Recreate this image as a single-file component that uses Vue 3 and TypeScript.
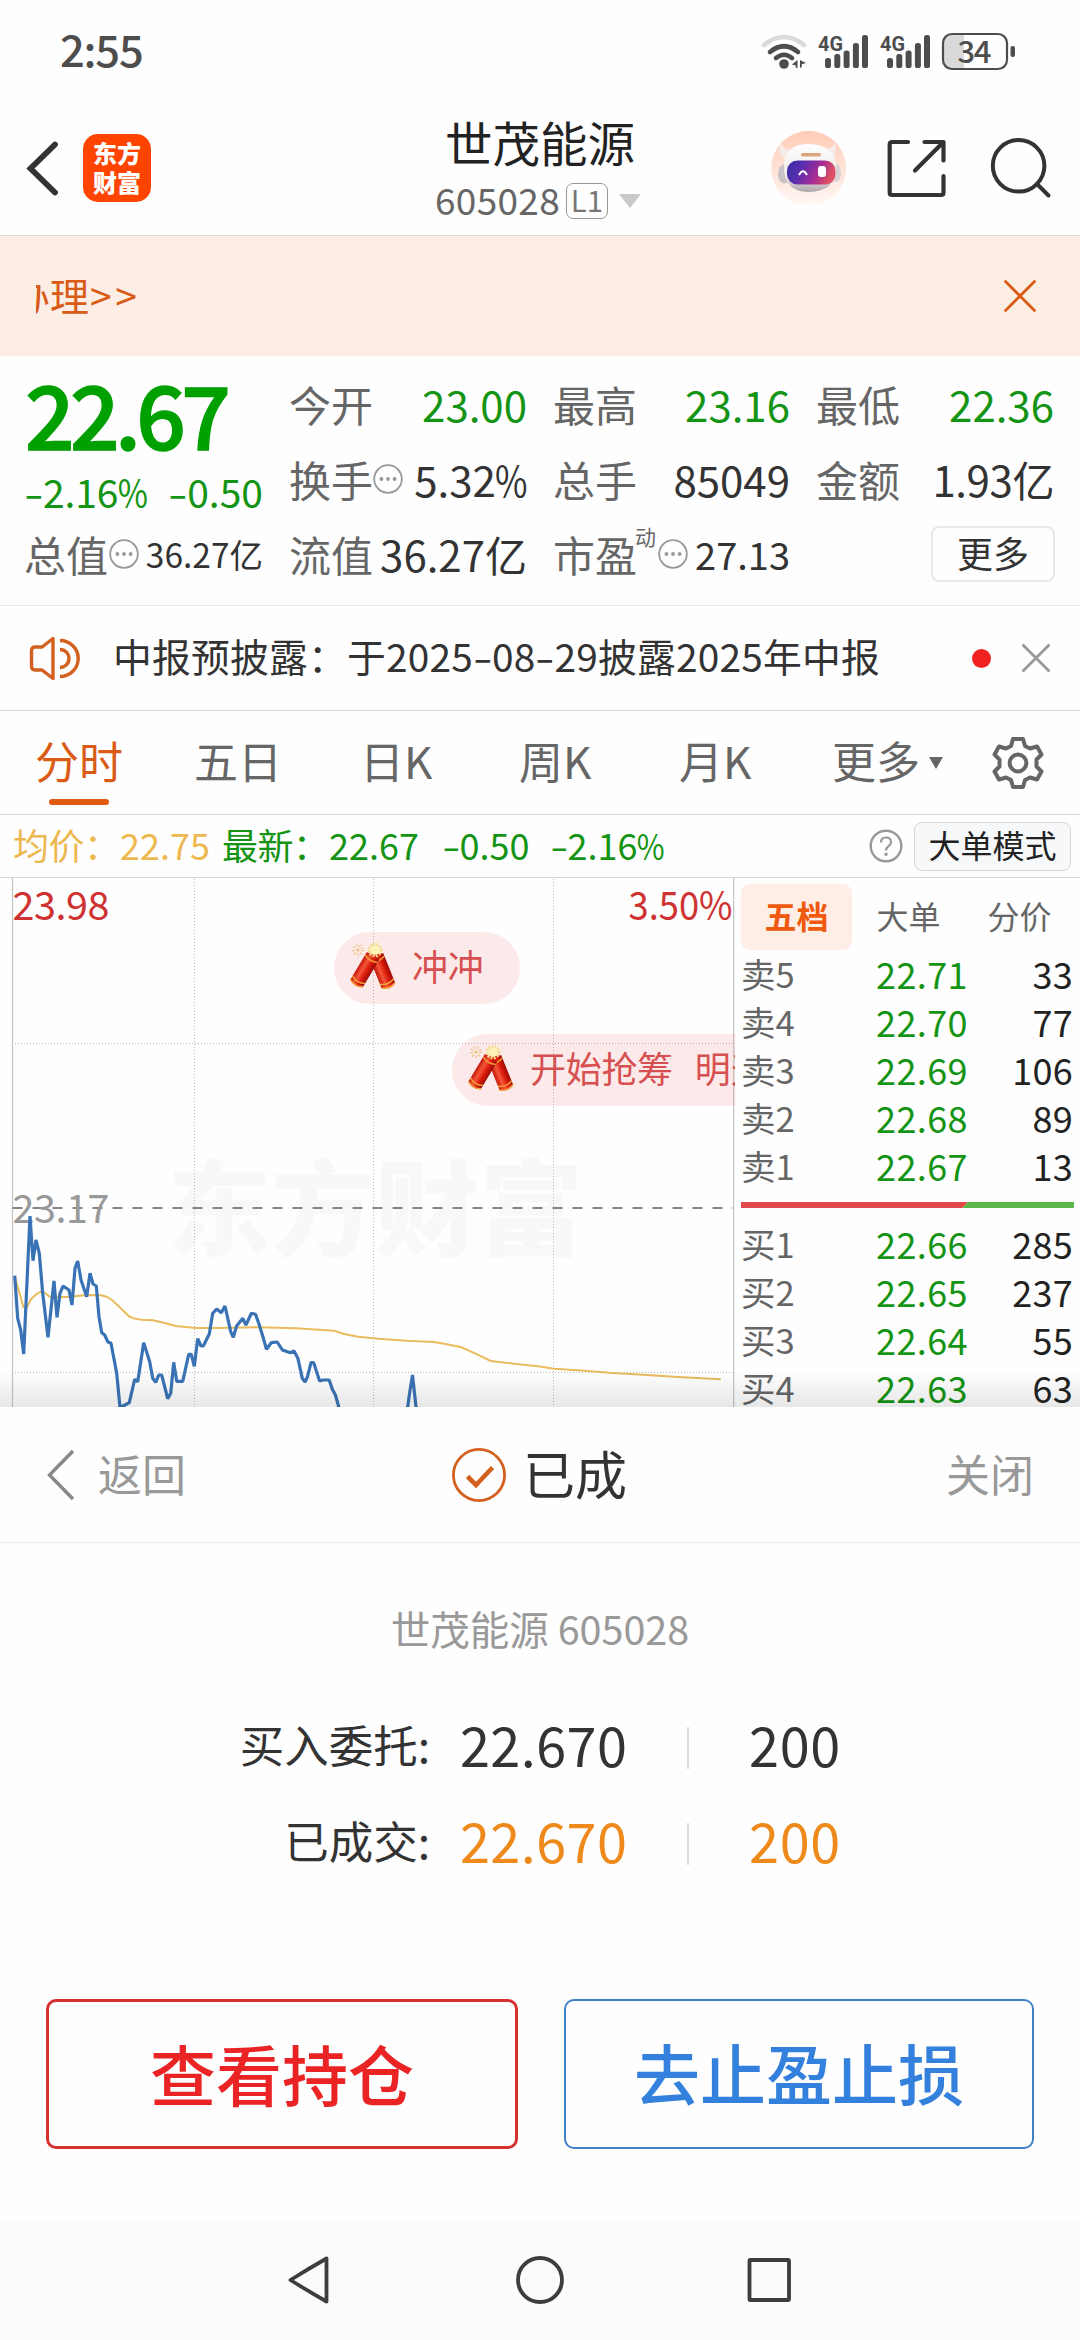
<script setup lang="ts">
import { h, type FunctionalComponent } from 'vue'

interface Level { side: string; price: string; volume: string }

// Renders a figure, narrowing "%" and widening "-" so they sit well beside the digits.
const Num: FunctionalComponent<{ v: string }> = (props) =>
  h(
    'span',
    { class: 'num' },
    props.v.split(/([%-])/).filter(Boolean).map((part) =>
      part === '%' ? h('i', { class: 'pct' }, '%') : part === '-' ? h('i', { class: 'dash' }, '-') : part,
    ),
  )
Num.props = ['v']

const MoreDots: FunctionalComponent = () =>
  h('svg', { class: 'dots', width: 30, height: 30, viewBox: '0 0 30 30' }, [
    h('circle', { cx: 15, cy: 15, r: 13.8, fill: 'none', stroke: '#999', 'stroke-width': 1.8 }),
    ...[8.4, 15, 21.6].map((cx) => h('circle', { cx, cy: 15, r: 1.9, fill: '#999' })),
  ])

const Cracker: FunctionalComponent = () =>
  h('svg', { class: 'cracker', width: 48, height: 50, viewBox: '0 0 48 50' }, [
    h('defs', [
      h('linearGradient', { id: 'tube', x1: 0, x2: 1, y1: 0, y2: 0 }, [
        h('stop', { offset: 0, 'stop-color': '#c31408' }),
        h('stop', { offset: 0.35, 'stop-color': '#f4573a' }),
        h('stop', { offset: 0.65, 'stop-color': '#dc1c0c' }),
        h('stop', { offset: 1, 'stop-color': '#9c0b05' }),
      ]),
    ]),
    h('circle', { cx: 10, cy: 7, r: 4.4, fill: 'none', stroke: '#e9c07a', 'stroke-width': 3, 'stroke-dasharray': '1 2.1' }),
    h('circle', { cx: 10, cy: 7, r: 1.5, fill: '#eec27a' }),
    ...['translate(28.5 13) rotate(-22)', 'translate(25 13) rotate(31)'].map((transform) =>
      h('g', { transform }, [
        h('path', { d: 'M-7.300 0Q0 -3 7.300 0V32Q0 37 -7.300 32Z', fill: 'url(#tube)' }),
        h('path', { d: 'M-7.300 3Q0 7 7.300 3M-7.300 27.500Q0 32 7.300 27.500M-7.300 31.500Q0 36 7.300 31.500', fill: 'none', stroke: '#f2a53a', 'stroke-width': 1.4 }),
      ]),
    ),
    h('circle', { cx: 27, cy: 7, r: 5.2, fill: 'none', stroke: '#f5dc8c', 'stroke-width': 4.4, 'stroke-dasharray': '1.6 1.2' }),
    h('circle', { cx: 27, cy: 7, r: 4.6, fill: '#fdf3b4' }),
  ])

const tabs = ['五日', '日K', '周K', '月K']

const sells: Level[] = [
  { side: '卖5', price: '22.71', volume: '33' },
  { side: '卖4', price: '22.70', volume: '77' },
  { side: '卖3', price: '22.69', volume: '106' },
  { side: '卖2', price: '22.68', volume: '89' },
  { side: '卖1', price: '22.67', volume: '13' },
]
const buys: Level[] = [
  { side: '买1', price: '22.66', volume: '285' },
  { side: '买2', price: '22.65', volume: '237' },
  { side: '买3', price: '22.64', volume: '55' },
  { side: '买4', price: '22.63', volume: '63' },
]

const priceLine =
  '14.7,1275.7 17.7,1318.3 20.7,1330 23.7,1354 30,1216 33,1260.7 36,1240 39.3,1253.3 42.7,1293.3 48,1337.3 54,1281 57,1317.3 60,1293.3 63,1286 69,1290 72,1305 75,1268.3 77.7,1261 81,1280 86.7,1296.7 90,1273.3 93,1284 96.3,1286 99,1316.7 101.7,1332.7 104.7,1335 107.7,1341.7 111,1343.3 116.7,1373.3 120,1407.3 125,1405 129.3,1402.7 134.7,1379.3 137.7,1381.7 143.7,1342.7 149.7,1361.7 152.7,1378.3 155.7,1382.3 158.7,1375 161.7,1375 167.7,1398.7 170.7,1393.3 173.7,1362.3 176.7,1381.3 182.7,1381.3 188.7,1354.3 191.3,1354.3 194.3,1366.3 197.7,1338.7 201,1346 203.3,1346 209.3,1334 212.7,1313.3 216.7,1309 221.3,1312.7 225,1306 230.7,1331.7 233.3,1337.3 236.6,1326 242.8,1318.3 245.9,1325 251.4,1313.3 255.5,1314.3 259,1324 263.4,1338.3 266.5,1349.3 271.3,1342.7 277.2,1342 282.4,1350 290.3,1352.7 294,1351 297.9,1358.3 302.3,1378.3 305.1,1382 307.5,1376.7 311,1362.7 313.7,1362.7 319.6,1381 323,1380 329.2,1380 332.3,1389.3 335.4,1395 338.8,1407 342,1420 404,1420 407.7,1407 409.8,1391.7 412.5,1375 416,1407 417,1420'
const averageLine =
  '14.8,1276.7 20,1295 23.4,1307 26.9,1307.3 31,1299 36,1294.5 41.3,1291.3 46,1293.5 50,1297 69,1297 86,1295 101.6,1295.3 107,1297 112,1300 120,1307.5 129,1316.3 134,1318.4 141.2,1319.7 153,1320.3 168.7,1324 175.6,1326 196.3,1328 220,1328 258,1327.3 296,1328.3 334,1330.7 344.4,1334 358,1336.7 378.8,1338.7 406.3,1340.7 434,1342 444.2,1343.7 461.4,1347.3 475,1353.3 490.7,1361 516.5,1364 540,1366.6 553.8,1368.7 585,1370.7 609,1372.7 643.3,1374.7 677.7,1377 720.8,1379.3'
</script>

<template>
  <div class="screen">
    <div class="status">
      <span class="clock">2:55</span>
      <svg width="256" height="40" viewBox="760 30 256 40" class="sys">
        <g fill="none" stroke="#4d4d4d" stroke-width="4.6" stroke-linecap="round">
          <path d="M764 44Q784 28 804 44" stroke="#d9d9d9" />
          <path d="M770 51Q784 39.5 798 51" />
          <path d="M776 57Q784 50.5 792 57" />
        </g>
        <circle cx="784" cy="63" r="4.8" fill="#4d4d4d" />
        <path d="M797.5 59V67H795.8V64.5L791.8 63.5ZM800 59V67L801.8 66V63.2L806 62Z" fill="#4d4d4d" />
        <g v-for="dx in [0, 62]" :key="dx" fill="#4d4d4d">
          <text :x="818 + dx" y="50" class="gen" textLength="25" lengthAdjust="spacingAndGlyphs">4G</text>
          <rect :x="825 + dx" y="57" width="6" height="10" rx="2.6" />
          <rect :x="834.3 + dx" y="53" width="6" height="14" rx="2.6" />
          <rect :x="843.6 + dx" y="49.5" width="6" height="17.5" rx="2.6" />
          <rect :x="852.9 + dx" y="42" width="6" height="25" rx="2.6" />
          <rect :x="862 + dx" y="34" width="6" height="33" rx="2.6" />
        </g>
        <path d="M964 34V67H951Q943 67 943 59V42Q943 34 951 34Z" fill="#d9d9d9" />
        <rect x="943" y="33" width="64" height="35" rx="9" fill="none" stroke="#4d4d4d" stroke-width="2.2" />
        <rect x="1010.5" y="45" width="4.5" height="11" rx="2" fill="#4d4d4d" />
        <text x="957.5" y="62" class="bat" textLength="34">34</text>
      </svg>
    </div>

    <header class="head">
      <svg width="34" height="60" viewBox="26 138 34 60" class="back">
        <path d="M55 144.500L30.500 168.500L55 192.500" fill="none" stroke="#333" stroke-width="5.800" stroke-linecap="round" stroke-linejoin="miter" />
      </svg>
      <div class="logo"><span>东方</span><span>财富</span></div>
      <div class="title">
        <div class="name">世茂能源</div>
        <div class="code"><span class="digits">605028</span><span class="l1">L1</span><i class="caret"></i></div>
      </div>
      <svg width="76" height="76" viewBox="771 130 76 76" class="robot">
        <defs>
          <linearGradient id="disc" x1="0" x2="0" y1="0" y2="1"><stop offset="0" stop-color="#ffccb6" /><stop offset="1" stop-color="#fff8f5" /></linearGradient>
          <linearGradient id="visor" x1="0" x2="1" y1="0" y2=".25"><stop offset="0" stop-color="#342ca0" /><stop offset=".35" stop-color="#5a2eb0" /><stop offset=".72" stop-color="#a82c92" /><stop offset="1" stop-color="#dd5064" /></linearGradient>
          <linearGradient id="shell" x1="0" x2="0" y1="0" y2="1"><stop offset="0" stop-color="#fff" /><stop offset=".7" stop-color="#eee8e8" /><stop offset="1" stop-color="#aaa3a8" /></linearGradient>
        </defs>
        <circle cx="808.600" cy="168.300" r="37.500" fill="url(#disc)" />
        <path d="M780.500 143Q776 154 786 160L796 149Q784 151 780.500 143ZM834.500 143Q839 154 830 160L821 149Q831 151 834.500 143Z" fill="#f6ebe8" />
        <ellipse cx="784" cy="174" rx="6" ry="9.500" fill="#c9c2c6" />
        <ellipse cx="836" cy="173" rx="5" ry="9" fill="#d9d2d5" />
        <path d="M784 168Q784 144 808 144Q836 144 836 168Q837 191 808 192Q784 191 784 168Z" fill="url(#shell)" />
        <rect x="801" y="153" width="20" height="3.500" rx="1.700" fill="#dba67c" />
        <rect x="787" y="160.500" width="48.500" height="24" rx="10.500" fill="url(#visor)" />
        <path d="M799 175Q803 167.500 807 175" fill="none" stroke="#fff" stroke-width="2" />
        <rect x="818" y="166" width="8" height="11" rx="3" fill="#fff" />
      </svg>
      <svg width="64" height="64" viewBox="884 136 64 64" class="share" fill="none" stroke="#333" stroke-width="4.200" stroke-linecap="round" stroke-linejoin="round">
        <path d="M908 142H892Q889.700 142 889.700 144.500V192.500Q889.700 195 892 195H941Q943.500 195 943.500 192.500V176M924.500 142H943.500V160.500M943 142.500L915 170.500" />
      </svg>
      <svg width="64" height="64" viewBox="988 136 64 64" class="search" fill="none" stroke="#333" stroke-width="4" stroke-linecap="round">
        <circle cx="1018.600" cy="165.800" r="25.800" /><path d="M1037 184L1048.500 195.500" />
      </svg>
    </header>

    <div class="banner">
      <div class="clip"><span>办理<u>&gt;&gt;</u></span></div>
      <svg width="32" height="32" viewBox="0 0 32 32"><path d="M1.500 1.500L30.500 30.500M30.500 1.500L1.500 30.500" stroke="#dc5a12" stroke-width="2.800" stroke-linecap="round" /></svg>
    </div>

    <section class="quote">
      <div class="main">
        <div class="last">22.67</div>
        <div class="chg"><Num v="-2.16%" /><Num v="-0.50" /></div>
        <div class="cell small"><span class="lab">总值<MoreDots /></span><b>36.27亿</b></div>
      </div>
      <div class="col">
        <div class="cell g"><span class="lab">今开</span><b>23.00</b></div>
        <div class="cell"><span class="lab">换手<MoreDots /></span><b><Num v="5.32%" /></b></div>
        <div class="cell"><span class="lab">流值</span><b>36.27亿</b></div>
      </div>
      <div class="col">
        <div class="cell g"><span class="lab">最高</span><b>23.16</b></div>
        <div class="cell"><span class="lab">总手</span><b>85049</b></div>
        <div class="cell pe"><span class="lab">市盈<sup>动</sup><MoreDots /></span><b>27.13</b></div>
      </div>
      <div class="col">
        <div class="cell g"><span class="lab">最低</span><b>22.36</b></div>
        <div class="cell amt"><span class="lab">金额</span><b>1.93亿</b></div>
        <div class="cell"><span></span><span class="more">更多</span></div>
      </div>
    </section>

    <div class="notice">
      <svg width="54" height="48" viewBox="28 633 54 48" fill="none" stroke="#d4601f" stroke-width="3.400" stroke-linejoin="round">
        <path d="M53 637.500V677.500L42 669H35Q31.500 669 31.500 665V650Q31.500 646 35 646H42ZM60 648.500A9 9 0 0 1 60 666.500M60 639.500A18.200 18 0 0 1 60 675.500" />
      </svg>
      <span class="msg"><Num v="中报预披露：于2025-08-29披露2025年中报" /></span>
      <i class="red"></i>
      <svg width="30" height="30" viewBox="0 0 30 30"><path d="M1.500 1.500L28.500 28.500M28.500 1.500L1.500 28.500" stroke="#999" stroke-width="2.800" /></svg>
    </div>

    <nav class="tabs">
      <span class="tab on">分时</span>
      <span v-for="t in tabs" :key="t" class="tab">{{ t }}</span>
      <span class="tab">更多<i class="tri"></i></span>
      <svg width="54" height="54" viewBox="-27 -27 54 54" fill="none" stroke="#666" stroke-width="4">
        <path stroke-linejoin="round" d="M-5 -24H5L7 -17L12 -14.500L19 -16.500L23.500 -8.500L18.500 -3.500V3.500L23.500 8.500L19 16.500L12 14.500L7 17L5 24H-5L-7 17L-12 14.500L-19 16.500L-23.500 8.500L-18.500 3.500V-3.500L-23.500 -8.500L-19 -16.500L-12 -14.500L-7 -17Z" />
        <circle r="8.400" />
      </svg>
    </nav>

    <div class="info">
      <span class="avg">均价：</span><span class="avg n1">22.75</span>
      <span class="cur">最新：</span><span class="cur n2">22.67</span>
      <span class="cur n3"><Num v="-0.50" /></span><span class="cur n4"><Num v="-2.16%" /></span>
      <svg width="34" height="34" viewBox="0 0 34 34" class="help">
        <circle cx="17" cy="17" r="15.300" fill="none" stroke="#999" stroke-width="2.400" />
        <path d="M12 13.500Q12 8.500 17 8.500T22 13.300Q22 15.500 19.300 17.400Q17 19 17 21.500" fill="none" stroke="#999" stroke-width="2.200" /><circle cx="17" cy="25.300" r="1.700" fill="#999" />
      </svg>
      <span class="mode">大单模式</span>
    </div>

    <div class="market">
      <div class="chart">
        <svg width="735" height="529" viewBox="0 878 735 529">
          <text x="167" y="1248" class="wm" textLength="416">东方财富</text>
          <path d="M12.500 878V1407M733.700 878V1407" stroke="#c4c4c4" stroke-width="1.200" />
          <path d="M194.500 879V1407M373.500 879V1407M553.500 879V1407M15 1043.500H733M15 1372.500H733" stroke="#bcbcbc" stroke-width="1" stroke-dasharray="1 2" />
          <path d="M12.500 1208H733" stroke="#858585" stroke-width="2" stroke-dasharray="10 10" />
          <text x="12.500" y="920" class="ax red-t" textLength="97">23.98</text>
          <text x="628.500" y="920" class="ax red-t" textLength="104" lengthAdjust="spacingAndGlyphs">3.50%</text>
          <text x="12.500" y="1223" class="ax gray-t" textLength="97">23.17</text>
          <polyline :points="averageLine" fill="none" stroke="#e9bb5c" stroke-width="2" />
          <polyline :points="priceLine" fill="none" stroke="#3a73b5" stroke-width="3.200" stroke-linejoin="bevel" />
        </svg>
        <div class="pill p1"><Cracker /><span>冲冲</span></div>
        <div class="pill p2"><Cracker /><span>开始抢筹</span><span class="next">明天</span></div>
      </div>
      <div class="book">
        <div class="btabs"><span class="bt on">五档</span><span class="bt">大单</span><span class="bt">分价</span></div>
        <div v-for="l in sells" :key="l.side" class="lv"><span>{{ l.side }}</span><em>{{ l.price }}</em><b>{{ l.volume }}</b></div>
        <svg class="ratio" width="333" height="6" viewBox="0 0 333 6"><path d="M0 0H227L221.500 6H0Z" fill="#e04a4a" /><path d="M227 0H333V6H221.500Z" fill="#5cb74a" /></svg>
        <div v-for="l in buys" :key="l.side" class="lv"><span>{{ l.side }}</span><em>{{ l.price }}</em><b>{{ l.volume }}</b></div>
      </div>
      <div class="shade"></div>
    </div>

    <section class="sheet">
      <div class="shead">
        <div class="sback"><svg width="30" height="52" viewBox="0 0 30 52"><path d="M27 2L3.500 26L27 50" fill="none" stroke="#888" stroke-width="3.400" /></svg><span>返回</span></div>
        <div class="done">
          <svg width="56" height="56" viewBox="0 0 56 56" fill="none" stroke="#d4601f"><circle cx="28" cy="28" r="25.600" stroke-width="2.800" /><path d="M16.500 29.500L25 38L41.500 20.500" stroke-width="4.600" /></svg>
          <span>已成</span>
        </div>
        <span class="close">关闭</span>
      </div>
      <div class="stock">世茂能源 605028</div>
      <div class="order"><span class="k">买入委托:</span><span class="p">22.670</span><i></i><span class="q">200</span></div>
      <div class="order deal"><span class="k">已成交:</span><span class="p">22.670</span><i></i><span class="q">200</span></div>
      <div class="btns"><div class="btn r">查看持仓</div><div class="btn b">去止盈止损</div></div>
    </section>

    <footer class="nav">
      <svg width="1080" height="120" viewBox="0 2220 1080 120" fill="none" stroke="#3d3d3d" stroke-width="3.800" stroke-linejoin="round">
        <path d="M326.500 2258.500V2301.500Q308 2291 290.500 2280Q308 2269 326.500 2258.500Z" />
        <circle cx="540" cy="2280" r="22" /><rect x="749.500" y="2260" width="39.500" height="40" rx="1" />
      </svg>
    </footer>
  </div>
</template>

<style>
body { background: #fff; }
.num i { font-style: normal; display: inline-block; }
.num .pct { transform: scaleX(.84); margin: 0 -.09em; }
.num .dash { transform: scaleX(1.45); margin: 0 .07em; }
.dots { display: block; flex: none; }
.cracker { flex: none; }
</style>

<style scoped>
.screen { width: 1080px; height: 2340px; overflow: hidden; background: #fefefe; font-family: "Noto Sans CJK SC", "Noto Sans", sans-serif; white-space: nowrap; color: #333; display: flex; flex-direction: column; }
.screen > * { flex: none; box-sizing: border-box; }
b, em, i { font-style: normal; font-weight: 400; }
u { text-decoration: none; letter-spacing: 3.500px; margin-left: 1px; }
.status { height: 96px; display: flex; align-items: center; justify-content: space-between; padding: 0 64px 0 60px; }
.clock { font-size: 43.5px; line-height: 60px; color: #4d4d4d; font-weight: 500; letter-spacing: -1.2px; margin-top: 1px; }
.sys { margin-top: 5px; }
.gen { font: 700 21px Roboto, sans-serif; }
.bat { font-size: 31px; font-weight: 500; fill: #4d4d4d; }
.head { height: 140px; border-bottom: 1px solid #d9d9d9; display: flex; align-items: center; padding-left: 26px; padding-top: 4px; }
.logo { width: 68px; height: 68px; margin-left: 23px; border-radius: 15px; background: #ff4400; color: #fff; font-size: 24px; font-weight: 900; display: flex; flex-direction: column; align-items: center; justify-content: center; }
.logo span { line-height: 30px; margin-top: -1px; }
.title { width: 400px; margin-left: 189px; text-align: center; display: flex; flex-direction: column; margin-top: 3px; }
.name { font-size: 47.5px; line-height: 60px; color: #222; }
.code { display: flex; align-items: center; height: 54px; padding-left: 95px; }
.digits { font-size: 37px; color: #666; line-height: 54px; letter-spacing: .3px; }
.l1 { box-sizing: border-box; width: 42px; height: 36px; border: 1.5px solid #999; border-radius: 7px; font-size: 29.500px; line-height: 30px; color: #777; margin: 4px 0 0 6px; }
.caret { border: 11px solid transparent; border-top: 14px solid #c9c9c9; border-bottom: 0; margin: 4px 0 0 11px; }
.robot { margin-left: 31px; }
.share { margin-left: 37px; }
.search { margin-left: 40px; }
.head svg { flex: none; }
.banner { height: 120px; background: #fceee5; display: flex; align-items: center; justify-content: space-between; padding: 0 44px 0 36px; color: #d95b16; }
.clip { overflow: hidden; width: 120px; font-size: 39px; line-height: 60px; margin-top: -4px; }
.clip span { display: block; margin-left: -25px; }
.quote { height: 250px; border-bottom: 1px solid #eaeaea; padding: 10px 25px 0 24px; display: grid; grid-template-columns: 239px 238px 237px 238px; column-gap: 26px; align-items: start; }
.last { font-size: 87px; line-height: 92px; font-weight: 500; -webkit-text-stroke: 1.400px #00a000; color: #00a000; letter-spacing: -4.600px; margin-left: 1px; }
.chg { font-size: 39px; line-height: 66px; display: flex; justify-content: space-between; color: #149414; }
.chg span:first-child { letter-spacing: -.1px; }
.cell { height: 75px; line-height: 75px; font-size: 42px; display: flex; justify-content: space-between; align-items: center; }
.cell.small { height: 59px; line-height: 59px; }
.small b { font-size: 33.500px; line-height: 61px; }
.pe b { font-size: 38px; }
.amt b { letter-spacing: -.4px; }
.lab { color: #666; display: flex; align-items: center; position: relative; }
.small .dots { margin-left: 1px; }
.pe .dots { margin-left: 21px; }
.pe sup { position: absolute; left: 82px; top: 8px; font-size: 21px; line-height: 24px; }
.g b { color: #149414; }
.more { box-sizing: border-box; width: 124px; height: 56px; border: 2px solid #e8e8e8; border-radius: 8px; text-align: center; font-size: 36px; line-height: 49px; margin-right: -1px; }
.notice { height: 105px; border-bottom: 1px solid #d5d5d5; display: flex; align-items: center; padding-left: 28px; }
.msg { font-size: 38.800px; line-height: 60px; margin-left: 31px; margin-top: -6px; width: 859px; letter-spacing: .2px; }
.red { width: 19px; height: 19px; border-radius: 50%; background: #f02222; }
.notice svg { flex: none; }
.notice svg:last-child { margin-left: 30px; }
.tabs { height: 104px; border-bottom: 1px solid #d5d5d5; display: grid; grid-template-columns: 159px 166px 159px 160px 153px 159px 54px; padding-left: 35px; align-items: center; font-size: 44px; line-height: 98px; color: #666; }
.tab { display: flex; align-items: flex-start; position: relative; height: 103px; }
.on { color: #d95b16; }
.tab.on::after { content: ""; position: absolute; left: 14px; bottom: 9px; width: 60px; height: 6px; border-radius: 3px; background: #e05a10; }
.tri { border: 7.500px solid transparent; border-top: 12px solid #666; border-bottom: 0; margin: 46px 0 0 9px; }
.info { height: 63px; border-bottom: 1px solid #d5d5d5; display: grid; grid-template-columns: 107px 102px 107px 113px 108px 319px 45px 157px; padding-left: 13px; align-items: center; font-size: 36px; line-height: 60px; }
.info > span:not(.mode) { margin-top: -5px; }
.avg { color: #edb84f; }
.cur { color: #149414; }
.avg:not(.n1), .cur:not(.n2, .n3, .n4) { letter-spacing: -.5px; }
.mode { box-sizing: border-box; width: 157px; height: 49px; background: #f7f8fa; border: 1.500px solid #d3d6d9; border-radius: 8px; color: #222; font-size: 32px; line-height: 43px; text-align: center; }
.market { height: 529px; display: flex; position: relative; overflow: hidden; }
.chart { width: 735px; height: 529px; position: relative; overflow: hidden; flex: none; }
.wm { font-size: 104px; font-weight: 900; fill: #f8f8f8; }
.ax { font-size: 39.500px; }
.red-t { fill: #cf3232; }
.gray-t { fill: #999; }
.pill { position: absolute; box-sizing: border-box; height: 72px; border-radius: 36px; background: rgba(240, 60, 60, .1); color: #d65050; font-size: 36px; line-height: 68px; display: flex; align-items: center; padding-left: 14px; }
.pill span { margin: -7px 0 0 16px; letter-spacing: -.3px; }
.pill .next { margin-left: 22px; }
.p1 { left: 334px; top: 54px; width: 186px; }
.p2 { left: 452px; top: 156px; width: 420px; }
.book { width: 333px; margin-left: 6px; padding-top: 6px; flex: none; }
.btabs { display: flex; height: 66px; font-size: 32px; line-height: 63px; color: #666; text-align: center; justify-content: space-between; margin-bottom: -1px; }
.bt { width: 111px; flex: none; }
.bt:nth-child(2) { margin-left: 1px; }
.bt:last-child { margin-right: -1px; }
.bt.on { background: #ffeee6; border-radius: 9px; color: #ef5a10; font-weight: 700; }
.lv { display: grid; grid-template-columns: 135px 110px 1fr; height: 48px; line-height: 48px; font-size: 36px; padding-right: 1px; }
.lv span { font-size: 34.500px; color: #666; }
.lv em { color: #149414; letter-spacing: .4px; }
.lv b { text-align: right; color: #222; letter-spacing: .3px; }
.ratio { display: block; margin: 13px 0 11px; }
.shade { position: absolute; left: 0; right: 0; bottom: 0; height: 36px; background: linear-gradient(rgba(0, 0, 0, 0), rgba(0, 0, 0, .09)); }
.sheet { height: 813px; background: #fefefe; }
.shead { height: 136px; box-sizing: border-box; border-bottom: 1px solid #ebebeb; display: grid; grid-template-columns: 1fr auto 1fr; align-items: center; padding: 0 46px; color: #999; font-size: 44px; line-height: 80px; }
.shead span { margin-top: -4px; }
.sback { display: flex; align-items: center; gap: 22px; }
.done { display: flex; align-items: center; gap: 16px; font-size: 52px; color: #333; margin-left: -2px; }
.close { text-align: right; }
.stock { margin-top: 55px; text-align: center; font-size: 39.500px; line-height: 60px; color: #999; }
.stock + .order { margin-top: 38px; }
.order { height: 96px; display: grid; grid-template-columns: 430px 257px 62px 200px; align-items: center; font-size: 54px; line-height: 96px; }
.order .k { font-size: 44.500px; text-align: right; line-height: 90px; }
.order .p { padding-left: 30px; letter-spacing: .4px; }
.order .q { letter-spacing: .7px; }
.order i { width: 1.500px; height: 42px; background: #dedede; margin-top: 8px; }
.deal .p, .deal .q { color: #ee8a1c; }
.btns { margin-top: 111px; padding: 0 46px; display: flex; gap: 46px; }
.btn { flex: 1; box-sizing: border-box; height: 150px; border-radius: 10px; font-size: 66px; line-height: 141px; text-align: center; font-weight: 500; }
.r { border: 3px solid #d73030; color: #ea2424; }
.b { border: 2px solid #4181c9; color: #3480dd; }
.nav { height: 120px; background: #fbfbfb; }
.nav svg { display: block; }
</style>
